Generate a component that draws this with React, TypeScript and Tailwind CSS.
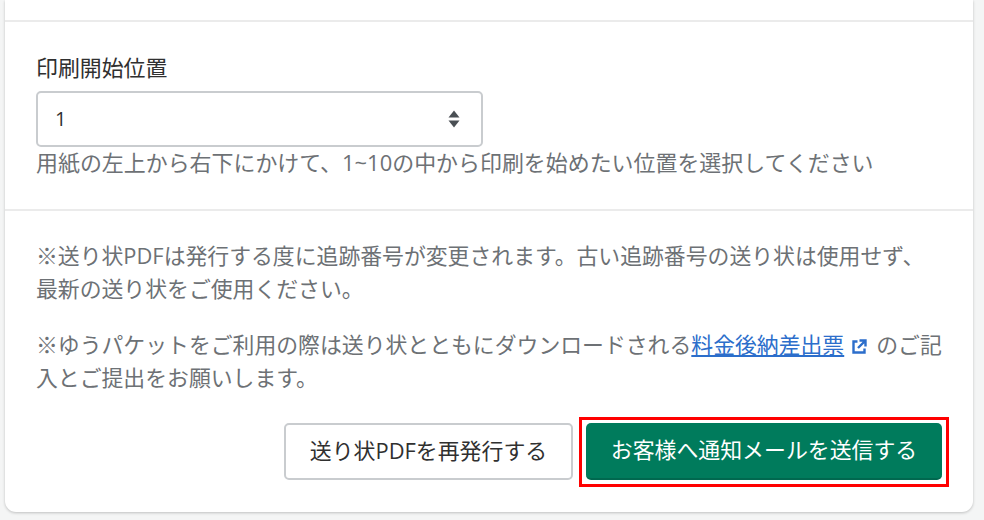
const fontStack = "font-['Open_Sans','Noto_Sans_CJK_JP',sans-serif]";

const App = () => {
  return (
    <div className={`h-[520px] w-[984px] overflow-hidden bg-[#f4f5f5] pr-[11px] pl-[5px] ${fontStack}`}>
      <div className="h-[512px] rounded-b-[11px] bg-white shadow-[0_1px_3px_rgba(0,0,0,0.22)]">
        <div className="h-[22px] border-b-2 border-[#ebebeb]" />
        <div className="h-[189px] border-b-2 border-[#ebebeb] px-[31px] pt-[31px]">
          <label className="block text-[21.9px] leading-[29px] text-[#303030]">印刷開始位置</label>
          <div className="mt-[9px] flex h-[56px] w-[447px] items-center justify-between rounded-[5px] border-2 border-[#c9cccf] pr-[21px] pl-[17px] text-[20px] text-[#303030]">
            <span>1</span>
            <svg width="12" height="18" viewBox="0 0 12 18" className="fill-[#4a4f54]">
              <path d="M6 0.5 11.5 7.5H0.5Z" />
              <path d="M6 17.5 0.5 10.5H11.5Z" />
            </svg>
          </div>
          <p className="mt-[1px] text-[21.95px] leading-[29px] whitespace-nowrap text-[#6d7175]">
            用紙の左上から右下にかけて、1~10の中から印刷を始めたい位置を選択してください
          </p>
        </div>
        <div className="px-[31px] pt-[28px] text-[21.85px] leading-[33px] whitespace-nowrap text-[#6d7175]">
          <p>
            ※送り状PDFは発行する度に追跡番号が変更されます。古い追跡番号の送り状は使用せず、
            <br />
            最新の送り状をご使用ください。
          </p>
          <p className="mt-[23px]">
            ※ゆうパケットをご利用の際は送り状とともにダウンロードされる
            <a className="text-[#2c6ecb] underline">料金後納差出票</a>
            <svg width="16" height="16" viewBox="0 0 16 16" className="mr-[9px] ml-[7px] inline-block align-[-2px] fill-none stroke-[#2c6ecb] stroke-[2.4]">
              <path d="M6.5 2.5H2.5V13.5H13.5V9.5" />
              <path d="M8.5 1.5H14.5V7.5M14 2 7 9" />
            </svg>
            のご記
            <br />
            入とご提出をお願いします。
          </p>
        </div>
        <div className="mt-[23px] flex items-start justify-end gap-[6px] pr-[24px]">
          <button className="mt-[6px] h-[57px] w-[289px] rounded-[5px] border-2 border-[#c9cccf] bg-white text-[21.9px] text-[#303030]">
            送り状PDFを再発行する
          </button>
          <div className="border-[3px] border-[#ff0000] px-[4px] pt-[3px] pb-[4px]">
            <button className="block h-[57px] w-[356px] rounded-[5px] border-b-2 border-[#00684f] bg-[#007b5c] text-[21.9px] text-white">
              お客様へ通知メールを送信する
            </button>
          </div>
        </div>
      </div>
    </div>
  );
};

export default App;
